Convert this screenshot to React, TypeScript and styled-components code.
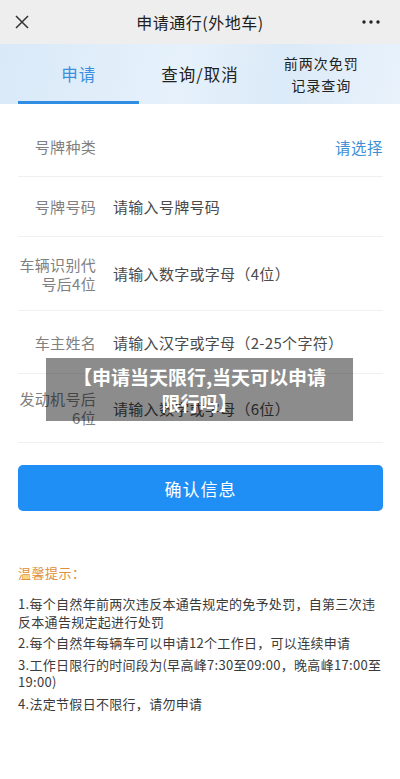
import React from "react";
import styled, { createGlobalStyle } from "styled-components";

const Global = createGlobalStyle`
  html, body { margin: 0; padding: 0; background: #ffffff; }
  body { font-family: "Noto Sans CJK SC", "Noto Sans", sans-serif; }
  * { box-sizing: border-box; }
`;

const Page = styled.div`
  width: 400px;
  min-height: 779px;
  position: relative;
  background: #fff;
  overflow: hidden;
`;

const TopBar = styled.div`
  height: 44px;
  background: #eeeeee;
  display: grid;
  grid-template-columns: 44px 1fr 44px;
  align-items: center;
`;

const IconBox = styled.div`
  display: flex;
  align-items: center;
  justify-content: center;
  height: 44px;
`;

const Title = styled.div`
  text-align: center;
  font-size: 16px;
  color: #1e1e1e;
  letter-spacing: 0.5px;
`;

const TabBar = styled.div`
  height: 60px;
  padding: 0 18px;
  display: grid;
  grid-template-columns: repeat(3, 1fr);
  background: linear-gradient(100deg, #d9e9f8 0%, #e6f1fb 45%, #dbeaf8 70%, #e9f2fb 100%);
`;

const Tab = styled.div<{ $active?: boolean; $small?: boolean }>`
  display: flex;
  align-items: center;
  justify-content: center;
  text-align: center;
  font-size: ${(p) => (p.$small ? "14px" : "16.5px")};
  line-height: ${(p) => (p.$small ? "22px" : "24px")};
  color: ${(p) => (p.$active ? "#3b8fde" : "#222")};
  border-bottom: 3px solid ${(p) => (p.$active ? "#2f8de4" : "transparent")};
  padding-top: ${(p) => (p.$small ? "2px" : "3px")};
  letter-spacing: 1px;
`;

const Form = styled.div`
  padding: 13px 17px 0 18px;
`;

const Row = styled.div<{ $h: number }>`
  height: ${(p) => p.$h}px;
  display: flex;
  align-items: center;
  border-bottom: 1px solid #f0f0f0;
`;

const Label = styled.div`
  width: 78px;
  flex: none;
  text-align: right;
  font-size: 15px;
  line-height: 19px;
  color: #808080;
  letter-spacing: 0.3px;
`;

const Value = styled.div`
  flex: 1;
  margin-left: 17px;
  font-size: 15px;
  color: #4a4a4a;
  letter-spacing: 0.3px;
`;

const Select = styled.div`
  margin-left: auto;
  font-size: 15.5px;
  color: #3e90d6;
  letter-spacing: 0.5px;
`;

const Button = styled.div`
  margin: 22px 17px 0 18px;
  height: 46px;
  border-radius: 5px;
  background: #1f8ff5;
  color: #fff;
  font-size: 17px;
  letter-spacing: 1px;
  display: flex;
  align-items: center;
  justify-content: center;
`;

const Notice = styled.div`
  padding: 53px 16px 0 18px;
`;

const NoticeTitle = styled.div`
  font-size: 13px;
  color: #e0903a;
  line-height: 18px;
  margin-bottom: 13px;
  letter-spacing: 0.5px;
`;

const Item = styled.div`
  font-size: 13px;
  line-height: 17.5px;
  color: #3a3a3a;
  letter-spacing: 0.3px;
  margin-bottom: 4px;
`;

const Overlay = styled.div`
  position: absolute;
  left: 46px;
  top: 358px;
  width: 307px;
  height: 63px;
  background: rgba(0, 0, 0, 0.45);
  color: #fff;
  font-weight: 700;
  font-size: 19px;
  line-height: 26px;
  text-align: center;
  display: flex;
  align-items: center;
  justify-content: center;
  padding: 0 4px;
`;

const rows = [
  { h: 60, label: "号牌种类", value: null, select: true },
  { h: 60, label: "号牌号码", value: "请输入号牌号码" },
  { h: 74, label: "车辆识别代号后4位", value: "请输入数字或字母（4位）" },
  { h: 63, label: "车主姓名", value: "请输入汉字或字母（2-25个字符）" },
  { h: 69, label: "发动机号后6位", value: "请输入数字或字母（6位）" },
];

export default function App() {
  return (
    <Page>
      <Global />
      <TopBar>
        <IconBox>
          <svg width="16" height="16" viewBox="0 0 16 16">
            <path d="M2 2 L14 14 M14 2 L2 14" stroke="#333" strokeWidth="1.5" fill="none" />
          </svg>
        </IconBox>
        <Title>申请通行(外地车)</Title>
        <IconBox>
          <svg width="18" height="4" viewBox="0 0 18 4" style={{ marginRight: 14 }}>
            <circle cx="2" cy="2" r="1.7" fill="#222" />
            <circle cx="9" cy="2" r="1.7" fill="#222" />
            <circle cx="16" cy="2" r="1.7" fill="#222" />
          </svg>
        </IconBox>
      </TopBar>
      <TabBar>
        <Tab $active>申请</Tab>
        <Tab>查询/取消</Tab>
        <Tab $small>
          前两次免罚
          <br />
          记录查询
        </Tab>
      </TabBar>
      <Form>
        {rows.map((r) => (
          <Row key={r.label} $h={r.h}>
            <Label>{r.label}</Label>
            {r.value && <Value>{r.value}</Value>}
            {r.select && <Select>请选择</Select>}
          </Row>
        ))}
      </Form>
      <Button>确认信息</Button>
      <Notice>
        <NoticeTitle>温馨提示：</NoticeTitle>
        <Item>1.每个自然年前两次违反本通告规定的免予处罚，自第三次违反本通告规定起进行处罚</Item>
        <Item>2.每个自然年每辆车可以申请12个工作日，可以连续申请</Item>
        <Item>3.工作日限行的时间段为(早高峰7:30至09:00，晚高峰17:00至19:00)</Item>
        <Item>4.法定节假日不限行，请勿申请</Item>
      </Notice>
      <Overlay>
        【申请当天限行,当天可以申请
        <br />
        限行吗】
      </Overlay>
    </Page>
  );
}
